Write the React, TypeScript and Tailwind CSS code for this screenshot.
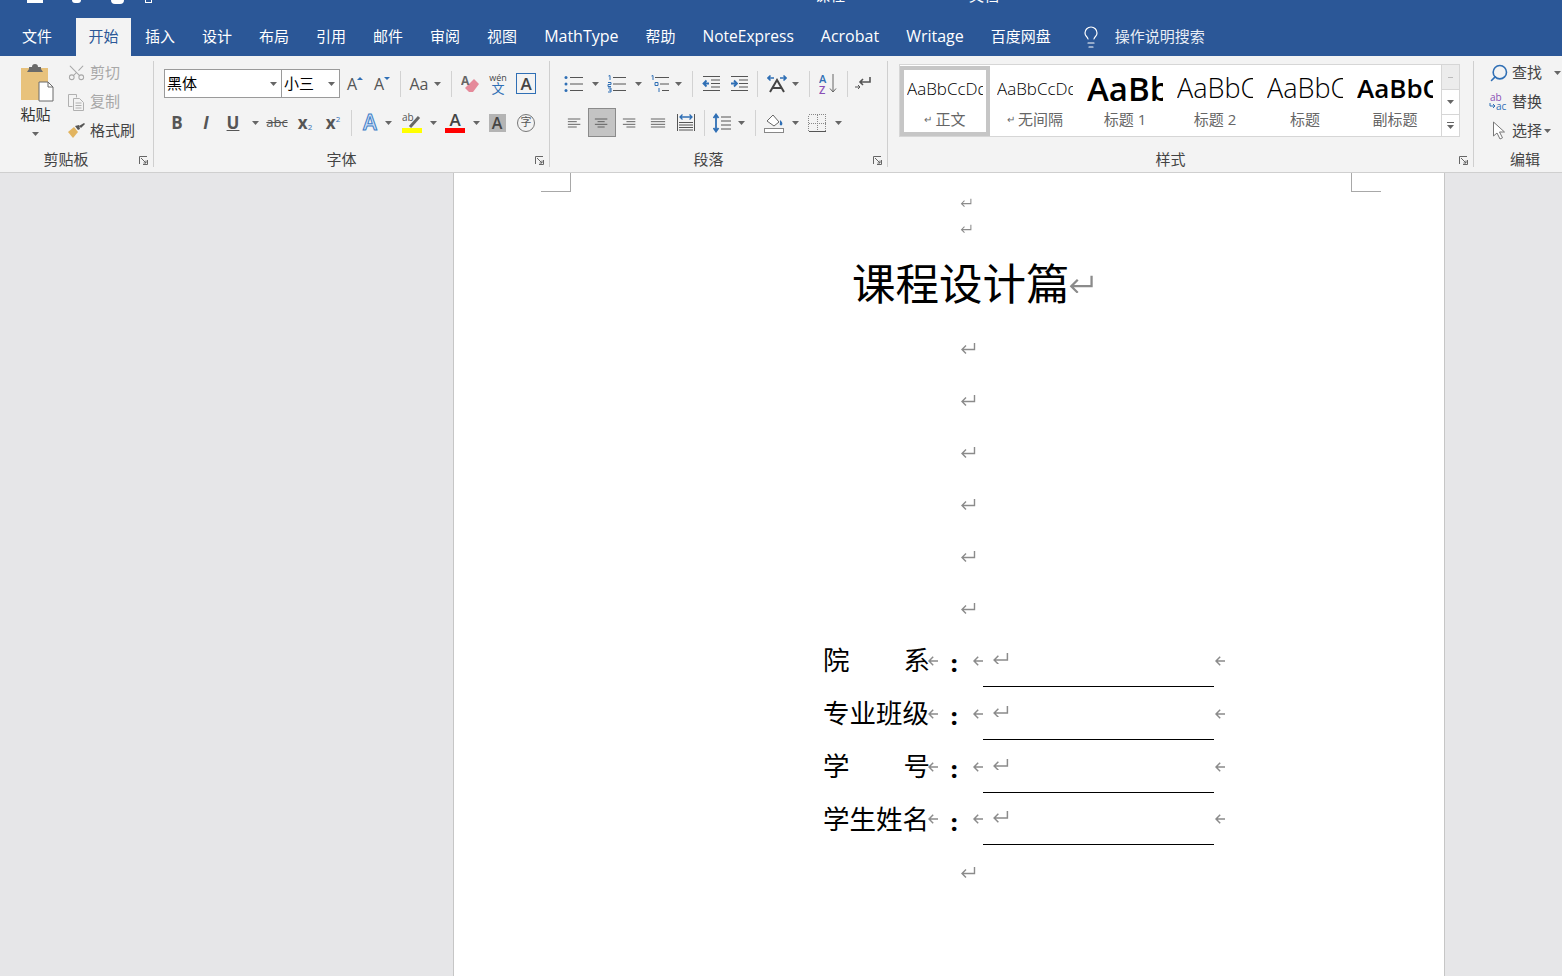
import type { ReactNode } from "react";
import { Lightbulb, Scissors, Search } from "lucide-react";

const tabs = ["设计", "布局", "引用", "邮件", "审阅", "视图", "MathType", "帮助", "NoteExpress", "Acrobat", "Writage", "百度网盘"];

function tabClass(t: string) {
  if (t === "NoteExpress") return "ml-[27px] flex items-center pt-[1px] pb-[2px] text-[15.5px]";
  if (/[A-Za-z]/.test(t)) return "ml-[27px] flex items-center pb-[2px] text-[16px]";
  return "ml-[27px] flex items-center pb-[2px]";
}

function Cell(props: { w: string; children?: ReactNode }) {
  return <div className={`flex h-full shrink-0 items-center justify-center ${props.w}`}>{props.children}</div>;
}

function Caret() {
  return (
    <svg width="7" height="4" viewBox="0 0 7 4" className="shrink-0">
      <path d="M0 0h7L3.5 4z" fill="#666" />
    </svg>
  );
}

function Sep() {
  return <div className="h-[26px] w-px shrink-0 bg-[#d2d2d2]" />;
}

function Launcher() {
  return (
    <svg width="9" height="9" viewBox="0 0 9 9" className="absolute bottom-[2px] right-[5px]">
      <path d="M.5 8V.5H8M8.5 4v4.5H4M2 2l5 5M7 4.5V7H4.5" fill="none" stroke="#666" strokeWidth="1" />
    </svg>
  );
}

function GroupLabel(props: { text: string; launcher?: boolean; cls: string }) {
  return (
    <div className={`relative mt-auto flex h-[15px] items-center justify-center text-[15px] leading-none text-[#444] ${props.cls}`}>
      {props.text}
      {props.launcher && <Launcher />}
    </div>
  );
}

function ReturnMark(props: { w: number }) {
  return (
    <svg width={props.w} height={props.w * 0.75} viewBox="0 0 16 12" className="shrink-0">
      <path d="M14.5 1v6.5H2M6 3.5l-4 4 4 4" fill="none" stroke="#8b8b8b" strokeWidth="1.4" />
    </svg>
  );
}

function CellArrow() {
  return (
    <svg width="10" height="10" viewBox="0 0 10 10" className="shrink-0">
      <path d="M10 5H1M5.2.8L1 5l4.200 4.200" fill="none" stroke="#8b8b8b" strokeWidth="1.5" />
    </svg>
  );
}

function Lines(props: { kind: "left" | "center" | "right" | "justify" }) {
  const rows =
    props.kind === "left"
      ? [[1, 15], [1, 11], [1, 15], [1, 11]]
      : props.kind === "center"
        ? [[1, 15], [4, 12], [1, 15], [4, 12]]
        : props.kind === "right"
          ? [[1, 15], [5, 15], [1, 15], [5, 15]]
          : [[1, 17], [1, 17], [1, 17], [1, 17]];
  return (
    <svg width="16" height="14" viewBox="0 0 18 14" className="shrink-0">
      {rows.map((r, i) => (
        <path key={i} d={`M${r[0]} ${2.5 + i * 3}H${r[1]}`} stroke="#555" strokeWidth="1" />
      ))}
    </svg>
  );
}

function ListIcon(props: { kind: "bullet" | "number" | "multi" }) {
  const blue = "#2f6fb5";
  return (
    <svg width="20" height="18" viewBox="0 0 20 18" className="shrink-0">
      {props.kind === "bullet" && (
        <>
          <circle cx="2" cy="2.5" r="1.5" fill={blue} />
          <circle cx="2" cy="9" r="1.5" fill={blue} />
          <circle cx="2" cy="15.5" r="1.5" fill={blue} />
        </>
      )}
      {props.kind === "number" && (
        <>
          <path d="M1.5 1L3 .5V5" fill="none" stroke={blue} />
          <path d="M1 7.5h3v2H1v2h3" fill="none" stroke={blue} />
          <path d="M1 13h3v4H1M2 15h2" fill="none" stroke={blue} />
        </>
      )}
      {props.kind === "multi" && (
        <>
          <path d="M1.5 1L3 .5V5" fill="none" stroke={blue} />
          <path d="M5 7.5h3v3H5z" fill="none" stroke={blue} />
          <path d="M9 13v4" stroke={blue} />
        </>
      )}
      {props.kind === "multi" ? (
        <path d="M5 2.5h14M10 9h9M12 15.5h7" stroke="#555" />
      ) : (
        <path d="M6 2.5h13M6 9h13M6 15.5h13" stroke="#555" />
      )}
    </svg>
  );
}

function Indent(props: { out?: boolean }) {
  return (
    <svg width="18" height="17" viewBox="0 0 18 17" className="shrink-0">
      <path d="M1 1.5h17M9 5h9M9 8.5h9M9 12h9M1 15.5h17" stroke="#555" />
      {props.out ? (
        <path d="M7 8.5H2M4.5 5.5l-3 3 3 3" fill="none" stroke="#2f6fb5" strokeWidth="1.8" />
      ) : (
        <path d="M1 8.5h5M4 5.5l3 3-3 3" fill="none" stroke="#2f6fb5" strokeWidth="1.8" />
      )}
    </svg>
  );
}

function RibbonRow(props: { children: ReactNode }) {
  return <div className="flex h-[29px] items-center">{props.children}</div>;
}

function ClipRow(props: { icon: ReactNode; text: string; dim?: boolean }) {
  return (
    <div className="flex h-[29px] items-center">
      <div className="flex w-[23px] shrink-0 justify-start">{props.icon}</div>
      <span className={props.dim ? "text-[15px] text-[#a8a8a8]" : "text-[15px] text-[#444]"}>{props.text}</span>
    </div>
  );
}

function EditRow(props: { icon: ReactNode; text: string; caret?: boolean }) {
  return (
    <div className="flex h-[29px] items-center">
      <div className="flex w-[26px] shrink-0 justify-center">{props.icon}</div>
      <span className="text-[15px] text-[#444]">{props.text}</span>
      {props.caret && (
        <span className="ml-[2px]">
          <Caret />
        </span>
      )}
    </div>
  );
}

function StyleItem(props: { preview: string; label: string; mark?: boolean; selected?: boolean; cls: string }) {
  return (
    <div
      className={`flex h-[70px] w-[90px] shrink-0 flex-col items-center ${
        props.selected ? "border-[4px] border-[#c6c6c6]" : "border-[4px] border-transparent"
      }`}
    >
      <div className="flex h-[38px] w-[76px] items-center overflow-hidden whitespace-nowrap text-black">
        <span className={props.cls}>{props.preview}</span>
      </div>
      <div className="flex items-center gap-[3px] text-[15px] leading-[22px] text-[#666]">
        {props.mark && <span className="text-[10px] text-[#666]">↵</span>}
        {props.label}
      </div>
    </div>
  );
}

function FormRow(props: { label: string[]; h: string }) {
  return (
    <div className={`flex items-center ${props.h}`}>
      <div className="-ml-[1px] flex w-[107px] shrink-0 justify-between text-[26.5px] leading-none text-black">
        {props.label.map((t) => (
          <span key={t}>{t}</span>
        ))}
      </div>
      <div className="-ml-[2px] flex w-[55px] shrink-0 items-center">
        <CellArrow />
        <span className="ml-[13px] mt-[5px] w-[23px] text-[22px] font-extrabold leading-none text-black">:</span>
        <CellArrow />
      </div>
      <div className="flex h-full w-[231px] shrink-0 items-center border-b border-black pb-[4px] pl-[9px]">
        <ReturnMark w={17} />
      </div>
      <div className="ml-[1px]">
        <CellArrow />
      </div>
    </div>
  );
}

function MarkRow(props: { h: string; w: number }) {
  return (
    <div className={`flex items-center pl-[506px] ${props.h}`}>
      <ReturnMark w={props.w} />
    </div>
  );
}

export default function App() {
  return (
    <div className="flex h-[976px] w-[1562px] flex-col overflow-hidden bg-[#e6e6e8] font-['Open_Sans','Noto_Sans_CJK_SC',sans-serif]">
      {/* Title bar, cut off by the top of the window */}
      <div className="flex h-[18px] shrink-0 items-start overflow-hidden bg-[#2b5797] text-white">
        <div className="ml-[27px] h-[3px] w-[16px] bg-white" />
        <div className="ml-[29px] h-[3px] w-[9px] rounded-b-full bg-white" />
        <div className="ml-[30px] h-[4px] w-[13px] rounded-b-full bg-white" />
        <div className="ml-[21px] h-[3px] w-[7px] border-x border-b border-white" />
        <div className="ml-[663px] -mt-[14px] text-[15px] leading-[18px]">课程</div>
        <div className="ml-[124px] -mt-[14px] text-[15px] leading-[18px]">文档</div>
      </div>

      {/* Tabs */}
      <div className="flex h-[38px] shrink-0 items-stretch bg-[#2b5797] text-[15px] text-white">
        <div className="ml-[22px] flex items-center pb-[2px]">文件</div>
        <div className="ml-[24px] mr-[14px] flex w-[55px] items-center justify-center bg-[#f3f3f3] pb-[2px] text-[#2b5797]">开始</div>
        <div className="flex items-center pb-[2px]">插入</div>
        {tabs.map((t) => (
          <div key={t} className={tabClass(t)}>
            {t}
          </div>
        ))}
        <div className="ml-[28px] flex items-center pb-[1px]">
          <Lightbulb size={24} strokeWidth={1.2} />
        </div>
        <div className="ml-[12px] flex items-center pb-[2px] text-[#e8edf5]">操作说明搜索</div>
      </div>

      {/* Ribbon */}
      <div className="flex h-[117px] shrink-0 border-b border-[#cfcfcf] bg-[#f3f3f3]">
        {/* Clipboard */}
        <div className="my-[5px] flex w-[154px] shrink-0 flex-col border-r border-[#cfcfcf]">
          <div className="flex">
            <div className="ml-[17px] flex w-[37px] flex-col items-center pt-[3px]">
              <svg width="36" height="38" viewBox="0 0 36 38">
                <rect x="3" y="4" width="27" height="32" fill="#e8c27c" />
                <path d="M11 5V3h3a3 3 0 0 1 6 0h3v2l2 3H9z" fill="#6a6a6a" />
                <path d="M21 18h9l5 5v14H21z" fill="#fff" stroke="#6a6a6a" />
                <path d="M30 18v5h5" fill="none" stroke="#6a6a6a" />
              </svg>
              <span className="mt-[2px] text-[15px] leading-[20px] text-[#333]">粘贴</span>
              <span className="mt-[8px]">
                <Caret />
              </span>
            </div>
            <div className="ml-[13px] -mt-[3px] flex flex-col">
              <ClipRow dim text="剪切" icon={<Scissors size={19} strokeWidth={1.3} className="-rotate-90 text-[#a8a8a8]" />} />
              <ClipRow
                dim
                text="复制"
                icon={
                  <svg width="18" height="18" viewBox="0 0 18 18">
                    <path d="M1.5 1.5h8v3M1.5 1.500v12h4" fill="none" stroke="#b0b0b0" />
                    <path d="M6.5 5.500h6l4 4v8h-10zM8.500 10h6M8.500 12.500h6M8.500 15h6" fill="none" stroke="#b0b0b0" />
                  </svg>
                }
              />
              <ClipRow
                text="格式刷"
                icon={
                  <svg width="18" height="16" viewBox="0 0 18 16">
                    <path d="M1 9l6-5 4 5-5 6z" fill="#e2b45f" />
                    <path d="M8 3l4-1 1 4-2 1zM12 3l5-3 1 1-4 4z" fill="#555" />
                  </svg>
                }
              />
            </div>
          </div>
          <GroupLabel text="剪贴板" launcher cls="pr-[21px]" />
        </div>

        {/* Font */}
        <div className="my-[5px] flex w-[396px] shrink-0 flex-col border-r border-[#cfcfcf]">
          <div className="flex flex-col gap-[10px] pl-[10px] pt-[8px]">
            <RibbonRow>
              <div className="flex h-full w-[118px] shrink-0 items-center justify-between border border-[#9a9a9a] bg-white pl-[2px] pr-[4px] text-[15px] text-black">
                黑体
                <Caret />
              </div>
              <div className="-ml-px flex h-full w-[59px] shrink-0 items-center justify-between border border-[#9a9a9a] bg-white pl-[2px] pr-[4px] text-[15px] text-black">
                小三
                <Caret />
              </div>
              <Cell w="w-[30px]">
                <span className="text-[16px] font-medium text-[#555]">A</span>
                <span className="-mt-[10px] h-0 w-0 border-x-[3px] border-b-[3px] border-x-transparent border-b-[#2f6fb5]" />
              </Cell>
              <Cell w="w-[24px]">
                <span className="text-[16px] font-medium text-[#555]">A</span>
                <span className="-mt-[10px] h-0 w-0 border-x-[3px] border-t-[3px] border-x-transparent border-t-[#2f6fb5]" />
              </Cell>
              <Cell w="w-[12px]">
                <Sep />
              </Cell>
              <Cell w="w-[26px]">
                <span className="text-[16px] font-medium text-[#555]">Aa</span>
              </Cell>
              <Cell w="w-[10px]">
                <Caret />
              </Cell>
              <Cell w="w-[18px]">
                <Sep />
              </Cell>
              <Cell w="w-[22px]">
                <svg width="20" height="20" viewBox="0 0 20 20">
                  <path d="M8 18l-4-4 9-9 5 5-6 8z" fill="#e58a9a" />
                  <text x="0" y="11" fontSize="12" fontWeight="700" fill="#666">A</text>
                </svg>
              </Cell>
              <Cell w="w-[32px]">
                <div className="flex flex-col items-center leading-none">
                  <span className="text-[9px] leading-[9px] text-[#444]">wén</span>
                  <span className="text-[13px] leading-[13px] text-[#2f6fb5]">文</span>
                </div>
              </Cell>
              <Cell w="w-[24px]">
                <div className="flex h-[21px] w-[20px] items-center justify-center border border-[#2f6fb5] text-[17px] font-semibold text-[#444]">A</div>
              </Cell>
            </RibbonRow>
            <RibbonRow>
              <Cell w="w-[26px]">
                <span className="text-[17px] font-bold leading-none text-[#555]">B</span>
              </Cell>
              <Cell w="w-[32px]">
                <span className="text-[17px] font-bold italic leading-none text-[#555]">I</span>
              </Cell>
              <Cell w="w-[22px]">
                <span className="text-[17px] font-bold leading-none text-[#555] underline">U</span>
              </Cell>
              <Cell w="w-[22px]">
                <Caret />
              </Cell>
              <Cell w="w-[22px]">
                <span className="text-[13px] text-[#555] line-through">abc</span>
              </Cell>
              <Cell w="w-[34px]">
                <span className="text-[17px] font-bold leading-none text-[#555]">x</span>
                <span className="mt-[8px] text-[8px] leading-none text-[#2f6fb5]">2</span>
              </Cell>
              <Cell w="w-[22px]">
                <span className="text-[17px] font-bold leading-none text-[#555]">x</span>
                <span className="-mt-[8px] text-[8px] leading-none text-[#2f6fb5]">2</span>
              </Cell>
              <Cell w="w-[14px]">
                <Sep />
              </Cell>
              <Cell w="w-[24px]">
                <span className="text-[21px] font-semibold leading-none text-[#cfe0f5] [-webkit-text-stroke:1px_#3f7fc8]">A</span>
              </Cell>
              <Cell w="w-[12px]">
                <Caret />
              </Cell>
              <Cell w="w-[36px]">
                <div className="flex w-[20px] flex-col items-stretch">
                  <svg width="20" height="15" viewBox="0 0 20 15">
                    <text x="0" y="8" fontSize="10" fill="#555">ab</text>
                    <path d="M8 14l9-10" stroke="#666" strokeWidth="3" />
                  </svg>
                  <div className="h-[5px] bg-[#ffff00]" />
                </div>
              </Cell>
              <Cell w="w-[6px]">
                <Caret />
              </Cell>
              <Cell w="w-[38px]">
                <div className="flex w-[20px] flex-col items-center">
                  <span className="text-[17px] font-semibold leading-[16px] text-[#444]">A</span>
                  <div className="h-[5px] w-[20px] bg-[#ff0000]" />
                </div>
              </Cell>
              <Cell w="w-[4px]">
                <Caret />
              </Cell>
              <Cell w="w-[38px]">
                <div className="flex h-[18px] w-[17px] items-center justify-center bg-[#b4b4b4] text-[16px] font-semibold text-[#444]">A</div>
              </Cell>
              <Cell w="w-[20px]">
                <div className="flex h-[18px] w-[18px] items-center justify-center rounded-full border border-[#777] text-[11px] text-[#555]">字</div>
              </Cell>
            </RibbonRow>
          </div>
          <GroupLabel text="字体" launcher cls="pr-[20px]" />
        </div>

        {/* Paragraph */}
        <div className="my-[5px] flex w-[338px] shrink-0 flex-col border-r border-[#cfcfcf]">
          <div className="flex flex-col gap-[10px] pl-[12px] pt-[8px]">
            <RibbonRow>
              <Cell w="w-[24px]">
                <ListIcon kind="bullet" />
              </Cell>
              <Cell w="w-[18px]">
                <Caret />
              </Cell>
              <Cell w="w-[26px]">
                <ListIcon kind="number" />
              </Cell>
              <Cell w="w-[16px]">
                <Caret />
              </Cell>
              <Cell w="w-[28px]">
                <ListIcon kind="multi" />
              </Cell>
              <Cell w="w-[8px]">
                <Caret />
              </Cell>
              <Cell w="w-[20px]">
                <Sep />
              </Cell>
              <Cell w="w-[18px]">
                <Indent out />
              </Cell>
              <Cell w="w-[6px]" />
              <Cell w="w-[26px]">
                <Indent />
              </Cell>
              <Cell w="w-[10px]">
                <Sep />
              </Cell>
              <Cell w="w-[30px]">
                <svg width="20" height="19" viewBox="0 0 20 19">
                  <path d="M1 4h6M3.500 1.500L1 4l2.500 2.500M13 4h6M16.500 1.500L19 4l-2.500 2.500" fill="none" stroke="#2f6fb5" strokeWidth="1.600" />
                  <path d="M3 18L10 6l7 12M6 14h8" fill="none" stroke="#444" strokeWidth="2" />
                </svg>
              </Cell>
              <Cell w="w-[6px]">
                <Caret />
              </Cell>
              <Cell w="w-[22px]">
                <Sep />
              </Cell>
              <Cell w="w-[18px]">
                <svg width="20" height="21" viewBox="0 0 20 21" className="shrink-0">
                  <text x="0" y="9.500" fontSize="11" fontWeight="600" fill="#2f6fb5">A</text>
                  <text x="0" y="20.500" fontSize="11" fontWeight="600" fill="#8a4fb5">Z</text>
                  <path d="M14 1v18M11 15.500l3 3.500 3-3.500" fill="none" stroke="#666" />
                </svg>
              </Cell>
              <Cell w="w-[18px]">
                <Sep />
              </Cell>
              <Cell w="w-[14px]">
                <svg width="16" height="15" viewBox="0 0 16 15" className="shrink-0">
                  <path d="M15 1v5H5M8 3L5 6l3 3" fill="none" stroke="#555" strokeWidth="1.600" />
                  <path d="M0 11h5M3 9l2 2-2 2" fill="none" stroke="#555" />
                </svg>
              </Cell>
            </RibbonRow>
            <RibbonRow>
              <Cell w="w-[26px]">
                <Lines kind="left" />
              </Cell>
              <Cell w="w-[28px]">
                <div className="flex h-full w-full items-center justify-center border border-[#8a8a8a] bg-[#c4c4c4]">
                  <Lines kind="center" />
                </div>
              </Cell>
              <Cell w="w-[28px]">
                <Lines kind="right" />
              </Cell>
              <Cell w="w-[28px]">
                <Lines kind="justify" />
              </Cell>
              <Cell w="w-[28px]">
                <svg width="18" height="19" viewBox="0 0 18 19" className="shrink-0">
                  <path d="M.5 1v17M17.500 1v17M2 9.500h14M2 12h14M2 14.500h14M2 17h14" stroke="#555" />
                  <path d="M3 4h12M5.500 1.500L3 4l2.500 2.500M12.500 1.500L15 4l-2.500 2.500" fill="none" stroke="#2f6fb5" strokeWidth="1.300" />
                </svg>
              </Cell>
              <Cell w="w-[8px]">
                <Sep />
              </Cell>
              <Cell w="w-[28px]">
                <svg width="18" height="20" viewBox="0 0 18 20" className="shrink-0">
                  <path d="M3 2v16M.5 5L3 1.500 5.500 5M.5 15L3 18.500 5.500 15" fill="none" stroke="#2f6fb5" strokeWidth="1.800" />
                  <path d="M8 4h10M8 8h10M8 12h10M8 16h10" stroke="#555" />
                </svg>
              </Cell>
              <Cell w="w-[10px]">
                <Caret />
              </Cell>
              <Cell w="w-[18px]">
                <Sep />
              </Cell>
              <Cell w="w-[20px]">
                <svg width="20" height="21" viewBox="0 0 20 21" className="shrink-0">
                  <path d="M3 9l6-6 6 7-5 4z" fill="#fff" stroke="#666" />
                  <path d="M16 8c2 2 3 3 2 5-1 1-3 0-2-2z" fill="#2f6fb5" />
                  <rect x=".5" y="16.500" width="19" height="4" fill="#fff" stroke="#888" />
                </svg>
              </Cell>
              <Cell w="w-[22px]">
                <Caret />
              </Cell>
              <Cell w="w-[22px]">
                <svg width="18" height="18" viewBox="0 0 18 18" className="shrink-0" shapeRendering="crispEdges">
                  <path d="M.5.500h17v17H.5zM9 .500v17M.5 9h17" fill="none" stroke="#888" strokeDasharray="1 1" />
                  <path d="M.5 17.500h17" stroke="#555" />
                </svg>
              </Cell>
              <Cell w="w-[20px]">
                <Caret />
              </Cell>
            </RibbonRow>
          </div>
          <GroupLabel text="段落" launcher cls="pr-[20px]" />
        </div>

        {/* Styles */}
        <div className="my-[5px] flex w-[586px] shrink-0 flex-col border-r border-[#cfcfcf]">
          <div className="ml-[11px] mt-[3px] flex h-[73px] w-[561px] border border-[#d6d6d6] bg-white">
            <div className="flex w-[541px] shrink-0 items-center">
              <StyleItem selected mark preview="AaBbCcDd" label="正文" cls="text-[17px] font-light" />
              <StyleItem mark preview="AaBbCcDd" label="无间隔" cls="text-[17px] font-light" />
              <StyleItem preview="AaBb" label="标题 1" cls="text-[33px] font-semibold" />
              <StyleItem preview="AaBbCc" label="标题 2" cls="text-[27px] font-light" />
              <StyleItem preview="AaBbCc" label="标题" cls="text-[27px] font-light" />
              <StyleItem preview="AaBbCc" label="副标题" cls="text-[26px] font-semibold" />
            </div>
            <div className="flex flex-1 flex-col border-l border-[#d6d6d6]">
              <div className="flex h-[25px] items-center justify-center border-b border-[#d6d6d6] bg-[#ececec]">
                <span className="h-px w-[5px] bg-[#bbb]" />
              </div>
              <div className="flex h-[24px] items-center justify-center">
                <Caret />
              </div>
              <div className="flex flex-1 flex-col items-center justify-center gap-[2px] border-t border-[#d6d6d6]">
                <span className="h-px w-[7px] bg-[#666]" />
                <Caret />
              </div>
            </div>
          </div>
          <GroupLabel text="样式" launcher cls="pr-[20px]" />
        </div>

        {/* Editing */}
        <div className="my-[5px] flex flex-1 flex-col">
          <div className="-mt-[3px] flex flex-col pl-[12px]">
            <div className="flex items-center">
              <EditRow text="查找" icon={<Search size={20} strokeWidth={1.9} className="-scale-x-100 text-[#2f6fb5]" />} />
              <span className="ml-[12px]">
                <Caret />
              </span>
            </div>
            <EditRow
              text="替换"
              icon={
                <svg width="20" height="19" viewBox="0 0 20 19">
                  <text x="1" y="9" fontSize="10" fill="#8a4fb5">ab</text>
                  <text x="7" y="18" fontSize="10" fill="#2f6fb5">ac</text>
                  <path d="M1 11v3h5M4 12l2 2-2 2" fill="none" stroke="#2f6fb5" />
                </svg>
              }
            />
            <EditRow
              caret
              text="选择"
              icon={
                <svg width="14" height="19" viewBox="0 0 14 19">
                  <path d="M1.500 1v14l3.500-3 3 6 2.500-1.200-3-5.800h5z" fill="#fff" stroke="#777" />
                </svg>
              }
            />
          </div>
          <GroupLabel text="编辑" cls="pl-[14px]" />
        </div>
      </div>

      {/* Document */}
      <div className="flex-1 overflow-hidden">
        <div className="ml-[453px] h-full w-[992px] border-x border-[#c6c6c6] bg-white">
          <div className="ml-[87px] mr-[63px] flex h-[19px] justify-between">
            <div className="w-[30px] border-b border-r border-[#a8a8a8]" />
            <div className="w-[30px] border-b border-l border-[#a8a8a8]" />
          </div>
          <MarkRow h="h-[20px]" w={12} />
          <MarkRow h="h-[32px]" w={12} />
          <div className="flex h-[78px] items-center pl-[398px] pt-[1px] text-[43.5px] leading-none text-black">
            课程设计篇
            <span className="-ml-[2px]">
              <ReturnMark w={26} />
            </span>
          </div>
          <MarkRow h="h-[52px]" w={16} />
          <MarkRow h="h-[52px]" w={16} />
          <MarkRow h="h-[52px]" w={16} />
          <MarkRow h="h-[52px]" w={16} />
          <MarkRow h="h-[52px]" w={16} />
          <MarkRow h="h-[52px]" w={16} />
          <div className="pl-[370px]">
            <FormRow h="h-[53px]" label={["院", "系"]} />
            <FormRow h="h-[53px]" label={["专业班级"]} />
            <FormRow h="h-[53px]" label={["学", "号"]} />
            <FormRow h="h-[52px]" label={["学生姓名"]} />
          </div>
          <MarkRow h="h-[54px]" w={16} />
        </div>
      </div>
    </div>
  );
}
